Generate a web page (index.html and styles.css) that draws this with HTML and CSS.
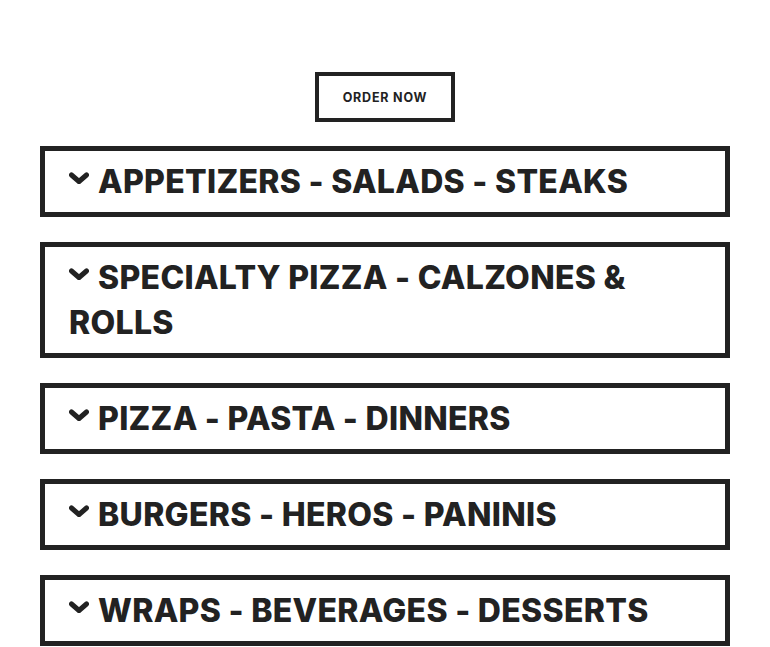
FILE: index.html
```html
<!DOCTYPE html>
<html>
<head>
  <title>Menu</title>
  <meta name="viewport" content="width=device-width, initial-scale=1">
  <link rel="stylesheet" href="styles.css">
</head>
<body>
<div class="menu">
  <div class="order-row">
    <a class="order-btn" href="#">Order Now</a>
  </div>

  <div class="menu-section">
    <h2><svg class="chev" viewBox="0 0 20 12"><path d="M2.5 3 L10 9.5 L17.5 3"/></svg>Appetizers - Salads - Steaks</h2>
  </div>

  <div class="menu-section">
    <h2><svg class="chev" viewBox="0 0 20 12"><path d="M2.5 3 L10 9.5 L17.5 3"/></svg>Specialty Pizza - Calzones &amp; Rolls</h2>
  </div>

  <div class="menu-section">
    <h2><svg class="chev" viewBox="0 0 20 12"><path d="M2.5 3 L10 9.5 L17.5 3"/></svg>Pizza - Pasta - Dinners</h2>
  </div>

  <div class="menu-section">
    <h2><svg class="chev" viewBox="0 0 20 12"><path d="M2.5 3 L10 9.5 L17.5 3"/></svg>Burgers - Heros - Paninis</h2>
  </div>

  <div class="menu-section">
    <h2><svg class="chev" viewBox="0 0 20 12"><path d="M2.5 3 L10 9.5 L17.5 3"/></svg>Wraps - Beverages - Desserts</h2>
  </div>
</div>
</body>
</html>
```

FILE: styles.css
```css
body {
  margin: 0;
  background: #fff;
  color: #222;
  font-family: Inter, "Noto Sans", sans-serif;
}

.menu {
  width: 690px;
  margin: 0 auto;
  padding-top: 72px;
  display: flex;
  flex-direction: column;
  gap: 25px;
}

.order-row {
  display: flex;
  justify-content: center;
  margin-bottom: -1px;
}

.order-btn {
  display: flex;
  align-items: center;
  justify-content: center;
  width: 140px;
  height: 50px;
  box-sizing: border-box;
  border: 4px solid #222;
  color: #222;
  text-decoration: none;
  text-transform: uppercase;
  font-size: 12.5px;
  font-weight: 700;
  letter-spacing: 0.8px;
}

.menu-section {
  border: 5px solid #222;
  padding: 8px 24px;
}

.menu-section h2 {
  margin: 0;
  font-size: 32px;
  line-height: 45px;
  font-weight: 800;
  letter-spacing: 0.3px;
  text-transform: uppercase;
}

.chev {
  width: 20px;
  height: 12px;
  margin-right: 9px;
  vertical-align: 9px;
  fill: none;
  stroke: #222;
  stroke-width: 5;
  stroke-linecap: round;
  stroke-linejoin: round;
}
```
